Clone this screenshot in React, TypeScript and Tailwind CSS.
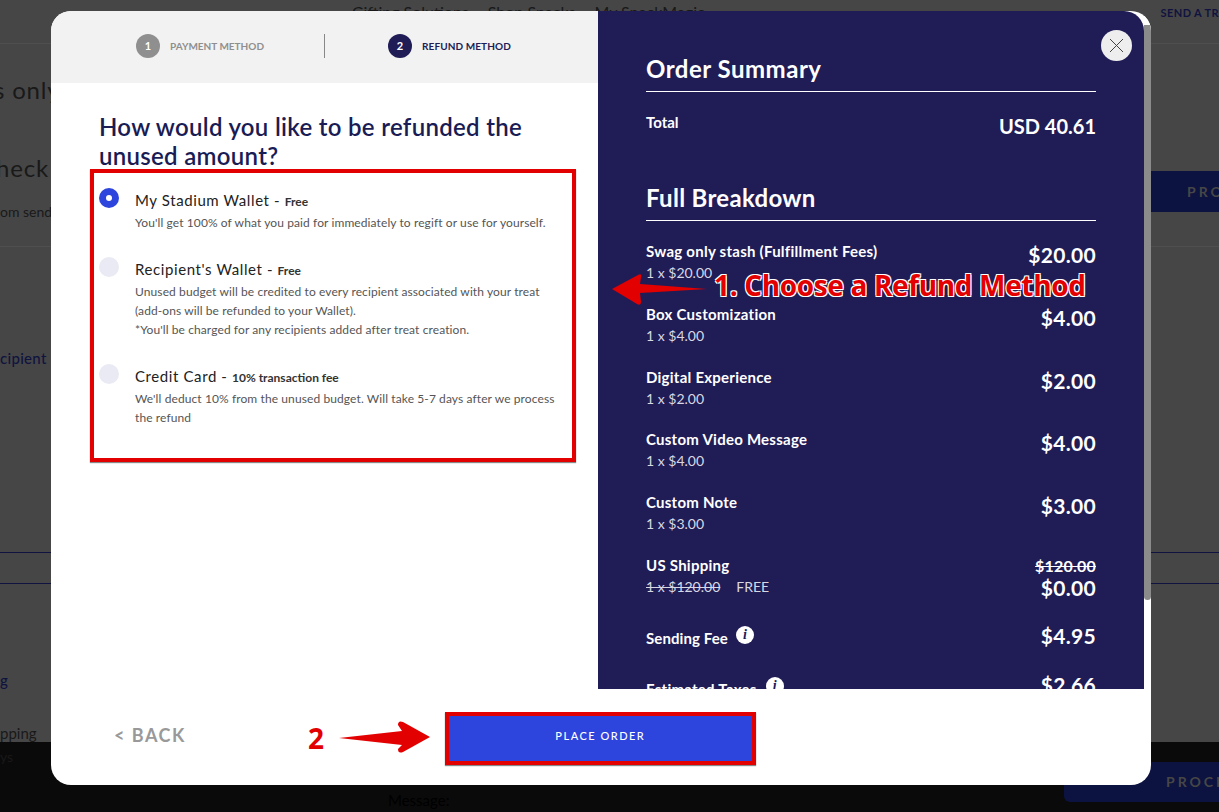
const font = "font-['Lato','Noto_Sans',sans-serif]";

const breakdown = [
  { name: "Swag only stash (Fulfillment Fees)", sub: "1 x $20.00", price: "$20.00" },
  { name: "Box Customization", sub: "1 x $4.00", price: "$4.00" },
  { name: "Digital Experience", sub: "1 x $2.00", price: "$2.00" },
  { name: "Custom Video Message", sub: "1 x $4.00", price: "$4.00" },
  { name: "Custom Note", sub: "1 x $3.00", price: "$3.00" },
];

const InfoDot = () => (
  <span className="mb-[6px] inline-flex h-[18px] w-[18px] items-center justify-center rounded-full bg-white font-['Liberation_Serif',serif] text-[14px] font-bold italic leading-none text-[#201c56]">
    i
  </span>
);

const Radio = ({ active }: { active?: boolean }) => (
  <span
    className={`mt-[-1px] flex h-5 w-5 shrink-0 items-center justify-center rounded-full ${
      active ? "bg-[#2d44dd]" : "bg-[#e9eaf3]"
    }`}
  >
    {active && <span className="h-[6px] w-[6px] rounded-full bg-white" />}
  </span>
);

const RefundOption = ({
  title,
  note,
  lines,
  active,
  gap,
}: {
  title: string;
  note: string;
  lines: string[];
  active?: boolean;
  gap: string;
}) => (
  <div className={`flex gap-4 ${gap}`}>
    <Radio active={active} />
    <div>
      <div className="flex h-6 items-baseline text-[15px] tracking-[0.6px] text-[#222]">
        {title} -&nbsp;<span className="text-[12px] font-bold tracking-normal text-[#333]">{note}</span>
      </div>
      <div className="text-[12px] leading-[19px] tracking-[0.1px] text-[#555]">
        {lines.map((l) => (
          <div key={l}>{l}</div>
        ))}
      </div>
    </div>
  </div>
);

const Background = () => (
  <div className="flex h-[812px] flex-col overflow-hidden bg-[#464646] text-[#191919]">
    <div className="flex h-[44px] shrink-0 justify-between border-b border-[#4f4f4f] pl-[352px]">
      <div className="mt-1 flex gap-[19px] text-[16px] leading-[16px]">
        <span>Gifting Solutions</span>
        <span>Shop Snacks</span>
        <span>My SnackMagic</span>
      </div>
      <span className="mt-[5px] whitespace-nowrap text-[11px] font-bold tracking-[0.4px] text-[#10133f]">
        SEND A TR
      </span>
    </div>
    <div className="ml-[-6px] mt-[31px] text-[24px] leading-[30px] tracking-[0.8px]">s only</div>
    <div className="mt-12 flex items-start justify-between">
      <div>
        <div className="ml-[-4px] text-[24px] leading-[30px] tracking-[0.8px]">heck</div>
        <div className="mt-[19px] text-[14px] leading-5">om send</div>
      </div>
      <div className="mt-[18px] h-[41px] w-[68px] whitespace-nowrap bg-[#0d1340] pl-9 pt-[10px] text-[14px] font-bold tracking-[3px] text-[#464646]">
        PRO
      </div>
    </div>
    <div className="mt-6 border-b border-[#4f4f4f]" />
    <div className="mt-[100px] text-[15px] font-medium leading-[22px] tracking-[0.3px] text-[#10133f]">cipient</div>
    <div className="mt-[183px] border-b border-[#10133f]" />
    <div className="mt-[30px] border-b border-[#10133f]" />
    <div className="mt-[85px] text-[15px] font-medium leading-[22px] text-[#10133f]">g</div>
    <div className="mt-8 text-[15px] leading-5">pping</div>
    <div className="mt-[-1px] flex grow bg-[#0a0a0a]">
      <span className="mt-[5px] w-[388px] text-[14px] leading-5">ys</span>
      <span className="mt-12 text-[15px] leading-5 text-[#000]">Message:</span>
      <div className="ml-auto mt-5 h-10 w-[155px] overflow-hidden whitespace-nowrap rounded-l-md bg-[#0d1340] pl-[102px] pt-[9px] text-[14px] font-bold tracking-[3px] text-[#464646]">
        PROCE
      </div>
    </div>
  </div>
);

export default function App() {
  return (
    <div className={`relative h-[812px] w-[1219px] overflow-hidden ${font}`}>
      <Background />

      {/* modal */}
      <div className="absolute left-[51px] top-[11px] flex h-[774px] w-[1100px] flex-col overflow-hidden rounded-[20px] bg-white">
        <div className="flex h-[678px]">
          <div className="w-[547px] shrink-0">
            <div className="flex h-[72px] items-center bg-[#f2f2f2] pb-[2px]">
              <div className="flex w-[274px] items-center justify-end gap-[10px] border-r border-[#888] pr-[60px]">
                <span className="flex h-6 w-6 items-center justify-center rounded-full bg-[#8f8f8f] text-[11px] font-bold text-white">
                  1
                </span>
                <span className="text-[10px] font-bold text-[#8f8f8f]">PAYMENT METHOD</span>
              </div>
              <div className="flex items-center gap-[10px] pl-[63px]">
                <span className="flex h-6 w-6 items-center justify-center rounded-full bg-[#201c56] text-[11px] font-bold text-white">
                  2
                </span>
                <span className="text-[10px] font-bold tracking-[0.1px] text-[#201c56]">REFUND METHOD</span>
              </div>
            </div>
            <h1 className="ml-12 mt-[29px] w-[450px] text-[24px] font-semibold leading-[29px] tracking-[0.3px] text-[#191c55]">
              How would you like to be refunded the unused amount?
            </h1>
            <div className="ml-[39px] mt-[-1px] h-[293px] w-[486px] border-4 border-[#e30000] pl-[5px] pt-4 shadow-[0_1px_1px_#888]">
              <RefundOption
                active
                title="My Stadium Wallet"
                note="Free"
                lines={["You'll get 100% of what you paid for immediately to regift or use for yourself."]}
                gap=""
              />
              <RefundOption
                title="Recipient's Wallet"
                note="Free"
                lines={[
                  "Unused budget will be credited to every recipient associated with your treat",
                  "(add-ons will be refunded to your Wallet).",
                  "*You'll be charged for any recipients added after treat creation.",
                ]}
                gap="mt-[26px]"
              />
              <RefundOption
                title="Credit Card"
                note="10% transaction fee"
                lines={["We'll deduct 10% from the unused budget. Will take 5-7 days after we process", "the refund"]}
                gap="mt-[26px]"
              />
            </div>
          </div>

          <div className="w-[546px] shrink-0 overflow-hidden rounded-tr-[20px] bg-[#201c56] pl-12 pr-[48px] pt-[43px] text-white">
            <h2 className="text-[24px] font-bold leading-[30px] tracking-[0.5px]">Order Summary</h2>
            <div className="mt-[7px] border-t border-white" />
            <div className="mt-[18px] flex items-start justify-between">
              <span className="text-[15px] font-bold leading-6">Total</span>
              <span className="mt-[3px] text-[20px] font-bold leading-[26px]">USD 40.61</span>
            </div>
            <h2 className="mt-11 text-[24px] font-bold leading-[30px] tracking-[0.3px]">Full Breakdown</h2>
            <div className="mt-[7px] border-t border-white" />
            <div className="mt-5">
              {breakdown.map((row) => (
                <div key={row.name} className="flex h-[62.75px] items-start justify-between">
                  <div>
                    <div className="text-[15px] font-bold leading-[21px] tracking-[0.25px]">{row.name}</div>
                    <div className="text-[14px] leading-[21px] text-[#d8d8e4]">{row.sub}</div>
                  </div>
                  <span className="mt-[1px] text-[21px] font-bold leading-[26px] tracking-[0.3px]">{row.price}</span>
                </div>
              ))}
              <div className="flex h-[60px] items-start justify-between">
                <div>
                  <div className="text-[15px] font-bold leading-[21px] tracking-[0.25px]">US Shipping</div>
                  <div className="text-[14px] leading-[21px] text-[#d8d8e4]">
                    <span className="line-through">1 x $120.00</span>
                    <span className="ml-4">FREE</span>
                  </div>
                </div>
                <div className="text-right">
                  <div className="text-[16px] font-bold leading-[21px] tracking-[0.2px] line-through">$120.00</div>
                  <div className="text-[21px] font-bold leading-[24px] tracking-[0.3px]">$0.00</div>
                </div>
              </div>
              <div className="mt-[-2px] flex h-[50px] items-center justify-between">
                <div className="flex items-center gap-[8px]">
                  <span className="text-[15px] font-bold tracking-[0.1px]">Sending Fee</span>
                  <InfoDot />
                </div>
                <span className="mb-1 text-[21px] font-bold tracking-[0.3px]">$4.95</span>
              </div>
              <div className="mt-1 flex h-[44px] items-center justify-between">
                <div className="flex items-center gap-[9px]">
                  <span className="text-[15px] font-bold tracking-[0.25px]">Estimated Taxes</span>
                  <InfoDot />
                </div>
                <span className="mb-2 text-[21px] font-bold tracking-[0.3px]">$2.66</span>
              </div>
            </div>
          </div>

          <div className="w-[7px] shrink-0 bg-white pt-[14px]">
            <div className="h-[575px] rounded-b-[4px] bg-[#8b8b8b]" />
          </div>
        </div>

        <div className="flex h-[96px] items-center pl-[63px]">
          <span className="mt-[-4px] text-[18px] font-bold tracking-[1.5px] text-[#999]">&lt; BACK</span>
          <div className="ml-[259px] mt-[2px] h-[53px] w-[311px] border-4 border-[#e30000] bg-[#2d44dd] text-center text-[11px] font-medium leading-[39px] tracking-[1.5px] text-white shadow-[0_1px_1px_#888]">
            PLACE ORDER
          </div>
        </div>
      </div>

      {/* close button */}
      <button className="absolute left-[1101px] top-[30px] flex h-[31px] w-[31px] items-center justify-center rounded-full bg-[#eeeeee]">
        <svg width="15" height="15" viewBox="0 0 15 15" fill="none" stroke="#444" strokeWidth="1">
          <path d="M1 1 14 14M14 1 1 14" />
        </svg>
      </button>

      {/* screenshot annotations */}
      <svg className="absolute left-[605px] top-[268px]" width="110" height="44" viewBox="605 268 110 44">
        <path
          d="M612 289 638 275 Q642 273 641 277 L640 284 707 289 L640 293 L641 302 Q641 306 637 304 Z"
          fill="#e30000"
        />
      </svg>
      <svg className="absolute left-[335px] top-[716px]" width="100" height="42" viewBox="335 716 100 42">
        <path
          d="M339 738 402 731 L398 725 Q398 720 403 722 L430 737 L403 752 Q398 754 398 749 L402 745 Z"
          fill="#e30000"
        />
      </svg>
      <span className="absolute left-[714px] top-[266px] font-['Open_Sans',sans-serif] text-[28px] font-bold leading-[38px] tracking-[-0.35px] text-[#e30000] [text-shadow:1px_1px_0_#fff,-1px_-1px_0_#fff,1px_-1px_0_#fff,-1px_1px_0_#fff]">
        1. Choose a Refund Method
      </span>
      <span className="absolute left-[308px] top-[719px] font-['Open_Sans',sans-serif] text-[28px] font-bold leading-[38px] text-[#e30000] [text-shadow:1px_1px_0_#fff,-1px_-1px_0_#fff,1px_-1px_0_#fff,-1px_1px_0_#fff]">
        2
      </span>
    </div>
  );
}
